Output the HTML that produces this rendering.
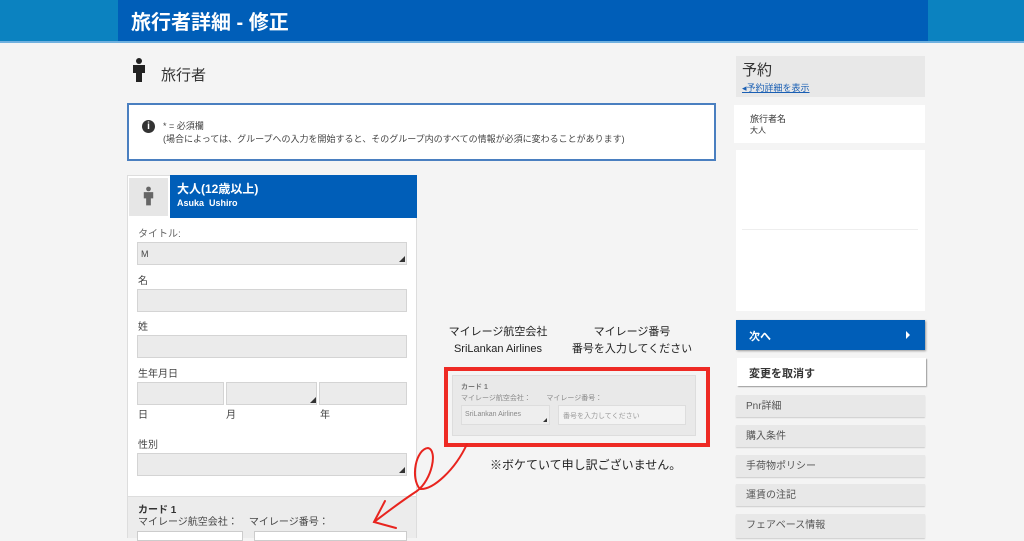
<!DOCTYPE html>
<html><head><meta charset="utf-8"><style>
*{box-sizing:border-box;margin:0;padding:0}
body{width:1024px;height:538px;overflow:hidden;background:#f4f4f4;font-family:"Liberation Sans","Noto Sans CJK JP",sans-serif;color:#333;position:relative}
.a{position:absolute}
.inp{position:absolute;background:#ebebeb;border:1px solid #d4d4d4}
.tri{position:absolute;width:0;height:0;border-left:6px solid transparent;border-bottom:6px solid #333}
.lbl{position:absolute;font-size:10px;color:#444;line-height:12px}
.side{position:absolute;left:736px;width:189px;background:#e8e8e8;font-size:10px;color:#555;padding-left:10px;box-shadow:0 1px 1px #ccc;line-height:12px;padding-top:6px}
</style></head><body>
<div class="a" style="left:0;top:0;width:1024px;height:42px;background:#0b82c0"></div>
<div class="a" style="left:118px;top:0;width:810px;height:42px;background:#005eb8"></div>
<div class="a" style="left:0;top:41px;width:1024px;height:2px;background:#6fb0df"></div>
<div class="a" style="left:131px;top:6px;font-size:20px;font-weight:bold;color:#fff">旅行者詳細 - 修正</div>

<svg class="a" style="left:132px;top:58px" width="14" height="24" viewBox="0 0 14 24"><circle cx="7" cy="3" r="3" fill="#222"/><path d="M1 7h12v8h-3v9H4v-9H1z" fill="#222"/></svg>
<div class="a" style="left:161px;top:64px;font-size:15px;color:#333">旅行者</div>

<div class="a" style="left:127px;top:103px;width:589px;height:58px;background:#fff;border:2px solid #4a7fc0"></div>
<div class="a" style="left:142px;top:120px;width:13px;height:13px;border-radius:50%;background:#333;color:#fff;font-size:10px;font-weight:bold;text-align:center;line-height:13px">i</div>
<div class="a" style="left:163px;top:120px;font-size:9px;color:#444;line-height:13px">* = 必須欄<br>(場合によっては、グループへの入力を開始すると、そのグループ内のすべての情報が必須に変わることがあります)</div>

<div class="a" style="left:127px;top:175px;width:290px;height:363px;background:#fff;border:1px solid #ddd"></div>
<div class="a" style="left:129px;top:178px;width:39px;height:38px;background:#e6e6e6"></div>
<svg class="a" style="left:143px;top:185px" width="11" height="22" viewBox="0 0 14 24"><circle cx="7" cy="3" r="3" fill="#666"/><path d="M1 7h12v8h-3v9H4v-9H1z" fill="#666"/></svg>
<div class="a" style="left:170px;top:175px;width:247px;height:43px;background:#005eb8"></div>
<div class="a" style="left:177px;top:180px;font-size:12px;font-weight:bold;color:#fff">大人(12歳以上)</div>
<div class="a" style="left:177px;top:198px;font-size:9px;font-weight:bold;color:#fff">Asuka&nbsp; Ushiro</div>

<div class="lbl" style="left:138px;top:229px;color:#666">タイトル:</div>
<div class="inp" style="left:137px;top:242px;width:270px;height:23px"></div>
<div class="lbl" style="left:141px;top:248px;font-size:9px">M</div>
<div class="tri" style="left:399px;top:256px"></div>
<div class="lbl" style="left:138px;top:276px">名</div>
<div class="inp" style="left:137px;top:289px;width:270px;height:23px"></div>
<div class="lbl" style="left:138px;top:322px">姓</div>
<div class="inp" style="left:137px;top:335px;width:270px;height:23px"></div>
<div class="lbl" style="left:138px;top:369px">生年月日</div>
<div class="inp" style="left:137px;top:382px;width:87px;height:23px"></div>
<div class="inp" style="left:226px;top:382px;width:91px;height:23px"></div>
<div class="tri" style="left:310px;top:397px"></div>
<div class="inp" style="left:319px;top:382px;width:88px;height:23px"></div>
<div class="lbl" style="left:138px;top:410px">日</div>
<div class="lbl" style="left:226px;top:410px">月</div>
<div class="lbl" style="left:320px;top:410px">年</div>
<div class="lbl" style="left:138px;top:440px">性別</div>
<div class="inp" style="left:137px;top:453px;width:270px;height:23px"></div>
<div class="tri" style="left:399px;top:467px"></div>
<div class="a" style="left:128px;top:496px;width:288px;height:42px;background:#ececec;border-top:1px solid #ddd"></div>
<div class="lbl" style="left:138px;top:505px;font-weight:bold;color:#333">カード 1</div>
<div class="lbl" style="left:138px;top:517px;color:#444">マイレージ航空会社：&nbsp;&nbsp;&nbsp;&nbsp;マイレージ番号：</div>
<div class="a" style="left:137px;top:531px;width:106px;height:10px;background:#fff;border:1px solid #ccc"></div>
<div class="a" style="left:254px;top:531px;width:153px;height:10px;background:#fff;border:1px solid #ccc"></div>

<div class="a" style="left:440px;top:324px;width:116px;text-align:center;font-size:11px;line-height:17px;color:#222">マイレージ航空会社<br>SriLankan Airlines</div>
<div class="a" style="left:562px;top:324px;width:140px;text-align:center;font-size:11px;line-height:17px;color:#222">マイレージ番号<br>番号を入力してください</div>
<div class="a" style="left:444px;top:367px;width:266px;height:80px;border:4px solid #ee2a24;background:#f4f4f4"></div>
<div class="a" style="left:452px;top:375px;width:244px;height:61px;background:#e9e9e9;border:1px solid #ddd"></div>
<div class="a" style="left:461px;top:382px;font-size:7px;color:#777;font-weight:bold">カード 1</div>
<div class="a" style="left:461px;top:393px;font-size:7px;color:#888">マイレージ航空会社：&nbsp;&nbsp;&nbsp;&nbsp;&nbsp;&nbsp;&nbsp;&nbsp;マイレージ番号：</div>
<div class="a" style="left:461px;top:405px;width:89px;height:20px;background:#eee;border:1px solid #ddd;font-size:7px;color:#888;padding:5px 3px">SriLankan Airlines</div>
<div class="tri" style="left:543px;top:418px;border-left-width:4px;border-bottom-width:4px"></div>
<div class="a" style="left:558px;top:405px;width:128px;height:20px;background:#f3f3f3;border:1px solid #ddd;font-size:7px;color:#999;padding:5px 4px">番号を入力してください</div>
<div class="a" style="left:490px;top:456px;font-size:12px;color:#222">※ボケていて申し訳ございません。</div>
<svg class="a" style="left:0;top:0" width="1024" height="538"><g fill="none" stroke="#e8241e" stroke-width="2" stroke-linecap="round"><path d="M467,444 C455,470 433,490 420,489 C410,478 416,449 428,448 C438,450 432,480 417,491 C400,502 386,513 374,522"/><path d="M385,501 L374,522 L396,528"/></g></svg>

<div class="a" style="left:736px;top:56px;width:189px;height:41px;background:#e8e8e8"></div>
<div class="a" style="left:742px;top:59px;font-size:15px;color:#333">予約</div>
<div class="a" style="left:742px;top:81px;font-size:9px;color:#1a5fb4;text-decoration:underline">◂予約詳細を表示</div>
<div class="a" style="left:734px;top:105px;width:191px;height:38px;background:#fff"></div>
<div class="a" style="left:750px;top:114px;font-size:9px;color:#333;line-height:11px">旅行者名<br><span style="font-size:8px">大人</span></div>
<div class="a" style="left:736px;top:150px;width:189px;height:161px;background:#fff"></div>
<div class="a" style="left:742px;top:229px;width:176px;height:1px;background:#eee"></div>
<div class="a" style="left:736px;top:320px;width:189px;height:30px;background:#005eb8;box-shadow:1px 1px 2px #999"></div>
<div class="a" style="left:749px;top:328px;font-size:11px;font-weight:bold;color:#fff">次へ</div>
<div class="a" style="left:906px;top:331px;width:0;height:0;border-left:4px solid #fff;border-top:4px solid transparent;border-bottom:4px solid transparent"></div>
<div class="a" style="left:737px;top:358px;width:189px;height:28px;background:#fff;box-shadow:1px 1px 1px #999"></div>
<div class="a" style="left:749px;top:365px;font-size:11px;font-weight:bold;color:#333">変更を取消す</div>
<div class="side" style="top:395px;height:22px">Pnr詳細</div>
<div class="side" style="top:425px;height:22px">購入条件</div>
<div class="side" style="top:455px;height:22px">手荷物ポリシー</div>
<div class="side" style="top:484px;height:22px">運賃の注記</div>
<div class="side" style="top:514px;height:24px">フェアベース情報</div>
</body></html>
